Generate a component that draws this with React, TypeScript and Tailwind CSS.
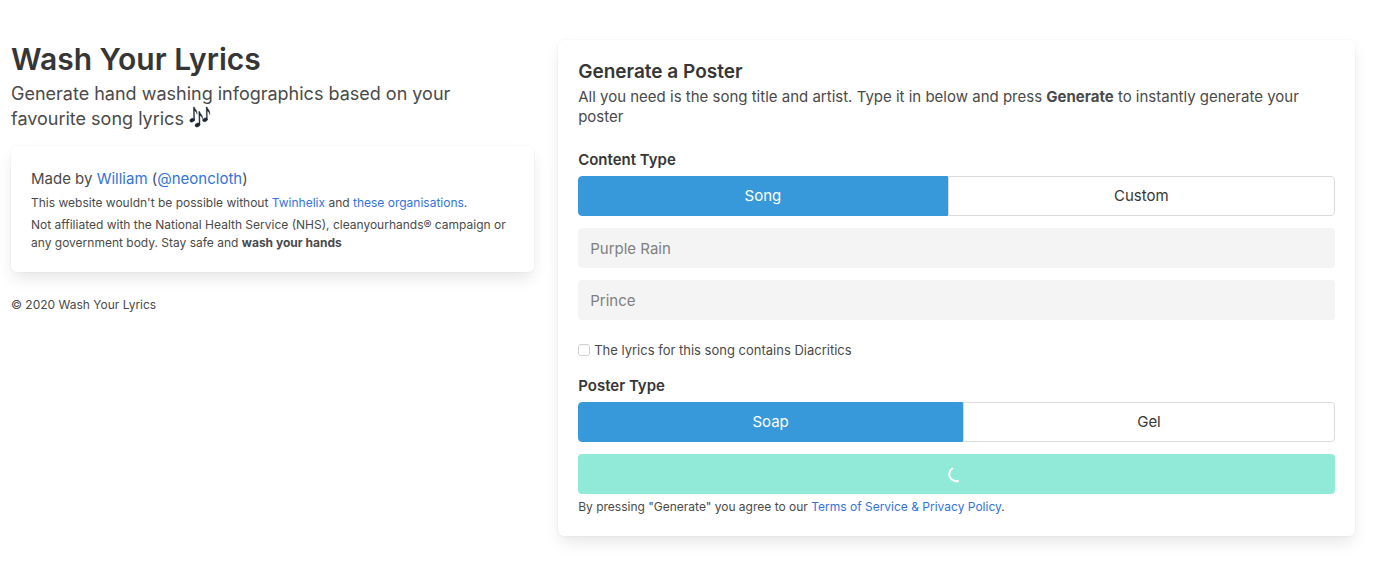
import { useState } from 'react';
import type { ReactNode } from 'react';
import clsx from 'clsx';

function Card({ children }: { children: ReactNode }) {
  return (
    <div className="rounded-md bg-white p-5 shadow-[0_8px_16px_-2px_rgba(10,10,10,0.1),0_0_0_1px_rgba(10,10,10,0.02)]">
      {children}
    </div>
  );
}

function Link({ href, children }: { href: string; children: ReactNode }) {
  return (
    <a href={href} className="text-[#3273dc] hover:text-[#363636]">
      {children}
    </a>
  );
}

function MusicNotes() {
  return (
    <svg viewBox="0 0 22 22" className="inline-block h-[22px] w-[22px] align-[-3px]" role="img" aria-label="Musical notes">
      <g fill="#1c2733" stroke="#1c2733" strokeWidth="0.4">
        <ellipse cx="3.2" cy="14.2" rx="2.5" ry="1.8" transform="rotate(-22 3.2 14.2)" />
        <path d="M4.4 1h.9c.3 2 3.2 3.4 2.8 7.2-.4-1.8-1.4-2.8-2.7-3.4l.2 9.4h-.9z" />
        <ellipse cx="8.5" cy="19" rx="2.6" ry="1.9" transform="rotate(-22 8.5 19)" />
        <path d="M9.8 5.5h.9c.4 2.4 3.4 3.6 2.9 7.4-.4-1.8-1.5-2.8-2.8-3.4l.2 9.5h-.9z" />
        <ellipse cx="16" cy="13.8" rx="2.5" ry="1.8" transform="rotate(-22 16 13.8)" />
        <path d="M17.2 1h.9c.3 2 3.5 3.6 2.7 7.6-.3-2-1.3-3.1-2.6-3.7l.2 8.9h-.9z" />
      </g>
    </svg>
  );
}

interface ToggleProps {
  label: string;
  options: string[];
  value: string;
  onChange: (value: string) => void;
}

function Toggle({ label, options, value, onChange }: ToggleProps) {
  return (
    <div role="group" aria-label={label} className="flex">
      {options.map((option) => (
        <button
          key={option}
          type="button"
          aria-pressed={option === value}
          onClick={() => onChange(option)}
          className={clsx(
            'h-10 grow border px-4 text-[15px] leading-6 first:rounded-l last:rounded-r',
            option === value ? 'border-[#3899da] bg-[#3899da] text-white' : 'border-[#dbdbdb] bg-white text-[#363636]',
          )}
        >
          {option}
        </button>
      ))}
    </div>
  );
}

function TextField({ label, placeholder }: { label: string; placeholder: string }) {
  return (
    <input
      type="text"
      aria-label={label}
      placeholder={placeholder}
      className="h-10 w-full rounded bg-[#f4f4f4] px-3 text-[15px] text-[#363636] placeholder:text-[#808080]"
    />
  );
}

function Intro() {
  return (
    <div className="w-2/5 px-3">
      <h1 className="text-[30px] leading-[38px] font-semibold text-[#363636]">Wash Your Lyrics</h1>
      <p className="mt-[3px] mb-[15px] pr-8 text-[18px] leading-[25px]">
        Generate hand washing infographics based on your favourite song lyrics <MusicNotes />
      </p>
      <Card>
        <p className="text-[15px] leading-[26px]">
          Made by <Link href="#william">William</Link> (<Link href="#neoncloth">@neoncloth</Link>)
        </p>
        <p className="mt-0.5 text-xs leading-[18px]">
          This website wouldn't be possible without <Link href="#twinhelix">Twinhelix</Link> and{' '}
          <Link href="#organisations">these organisations</Link>.
        </p>
        <p className="mt-1 text-xs leading-[18px]">
          Not affiliated with the National Health Service (NHS), cleanyourhands® campaign or any government body. Stay
          safe and <strong>wash your hands</strong>
        </p>
      </Card>
      <p className="mt-6 text-xs leading-[18px]">© 2020 Wash Your Lyrics</p>
    </div>
  );
}

function PosterForm() {
  const [contentType, setContentType] = useState('Song');
  const [posterType, setPosterType] = useState('Soap');

  return (
    <div className="w-3/5 px-3">
      <Card>
        <h2 className="text-[19px] leading-6 font-semibold text-[#363636]">Generate a Poster</h2>
        <p className="mt-[3px] text-[15px] leading-5">
          All you need is the song title and artist. Type it in below and press <strong>Generate</strong> to instantly
          generate your poster
        </p>
        <form onSubmit={(e) => e.preventDefault()}>
          <h3 className="mt-[21px] mb-1 text-[15px] leading-6 font-semibold text-[#363636]">Content Type</h3>
          <Toggle label="Content Type" options={['Song', 'Custom']} value={contentType} onChange={setContentType} />
          <div className="mt-3 flex flex-col gap-3">
            <TextField label="Song title" placeholder="Purple Rain" />
            <TextField label="Artist" placeholder="Prince" />
          </div>
          <label className="mt-5 flex items-center gap-1 text-[13px] leading-5">
            <input
              type="checkbox"
              className="h-3 w-3 appearance-none rounded-[3px] border border-[#cfcfcf] bg-white checked:bg-[#3899da]"
            />
            The lyrics for this song contains Diacritics
          </label>
          <h3 className="mt-[14px] mb-1 text-[15px] leading-6 font-semibold text-[#363636]">Poster Type</h3>
          <Toggle label="Poster Type" options={['Soap', 'Gel']} value={posterType} onChange={setPosterType} />
          <button
            type="submit"
            disabled
            aria-label="Generate"
            className="mt-3 flex h-10 w-full items-center justify-center rounded bg-[#91e9d8]"
          >
            <svg viewBox="0 0 16 16" className="h-4 w-4 overflow-visible" fill="none" stroke="#fff" strokeWidth="2">
              <path d="M3.8 2.1A7 7 0 0 0 9.8 14.7" />
            </svg>
          </button>
        </form>
        <p className="mt-1 text-xs leading-[18px]">
          By pressing "Generate" you agree to our <Link href="#terms">Terms of Service &amp; Privacy Policy</Link>.
        </p>
      </Card>
    </div>
  );
}

export default function App() {
  return (
    <main className="py-10 pr-5 pl-[11px] font-['Inter','Liberation_Sans',sans-serif] text-[#4a4a4a]">
      <div className="-mx-3 flex items-start">
        <Intro />
        <PosterForm />
      </div>
    </main>
  );
}
